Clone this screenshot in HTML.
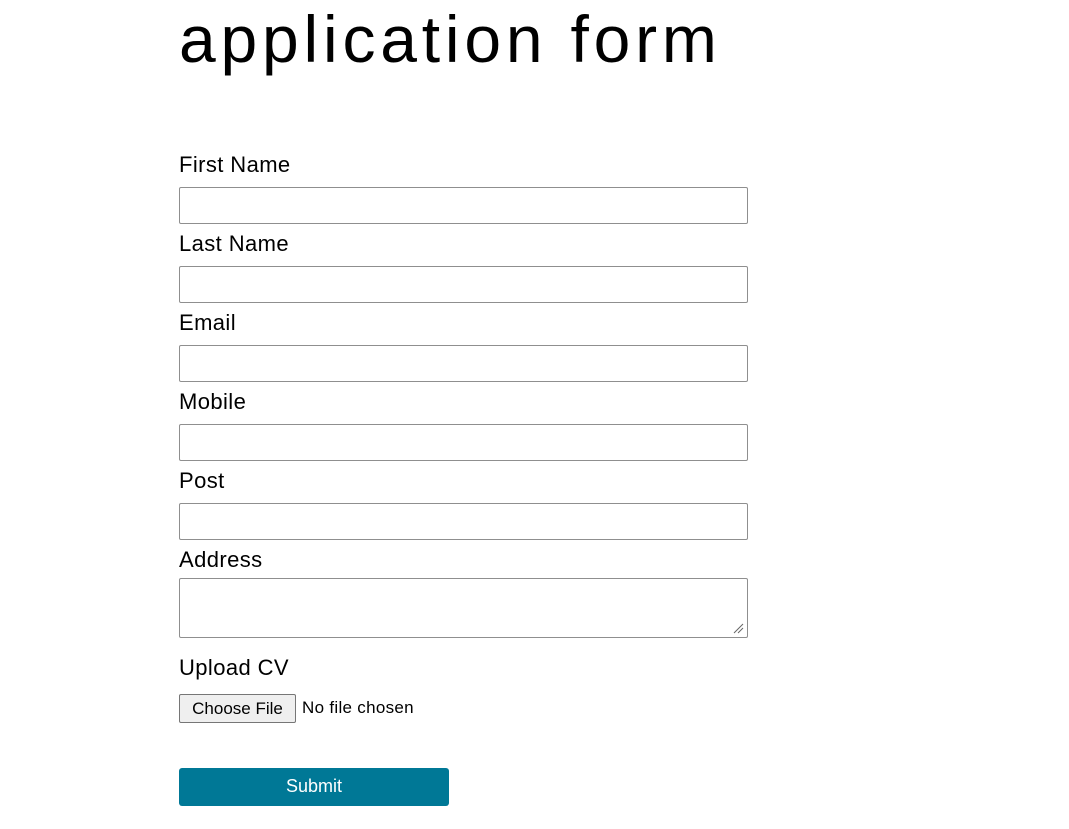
<!DOCTYPE html>
<html><head><meta charset="utf-8"><style>
body{margin:0;background:#fff;font-family:"Liberation Sans",sans-serif;width:1069px;height:829px;position:relative;overflow:hidden}
.a{position:absolute;white-space:nowrap}
h1{position:absolute;left:179px;top:-6px;margin:0;font-weight:normal;font-size:66px;line-height:90px;letter-spacing:4.8px}
.l{position:absolute;left:179px;font-size:22px;line-height:26px;color:#000;letter-spacing:0.4px}
.i{position:absolute;left:179px;width:567px;height:35px;border:1px solid #8f8f8f;border-radius:2px;background:#fff}
</style></head><body>
<h1>application form</h1>
<div class="l" style="top:152px">First Name</div>
<div class="i" style="top:187px"></div>
<div class="l" style="top:231px">Last Name</div>
<div class="i" style="top:266px"></div>
<div class="l" style="top:310px">Email</div>
<div class="i" style="top:345px"></div>
<div class="l" style="top:389px">Mobile</div>
<div class="i" style="top:424px"></div>
<div class="l" style="top:468px">Post</div>
<div class="i" style="top:503px"></div>
<div class="l" style="top:547px">Address</div>
<div class="i" style="top:578px;height:58px"></div>
<svg class="a" style="left:732px;top:622px" width="12" height="12"><path d="M2 11L11 2M6 11L11 6" stroke="#666" stroke-width="1"/></svg>
<div class="l" style="top:655px">Upload CV</div>
<div class="a" style="left:179px;top:694px;width:115px;height:27px;border:1px solid #767676;border-radius:2px;background:#efefef;font-size:17px;line-height:27px;text-align:center">Choose File</div>
<div class="a" style="left:302px;top:694px;font-size:17px;line-height:28px;letter-spacing:0.3px">No file chosen</div>
<div class="a" style="left:179px;top:768px;width:270px;height:38px;background:#007896;border-radius:3px;color:#fff;font-size:18px;line-height:36px;text-align:center">Submit</div>
</body></html>
